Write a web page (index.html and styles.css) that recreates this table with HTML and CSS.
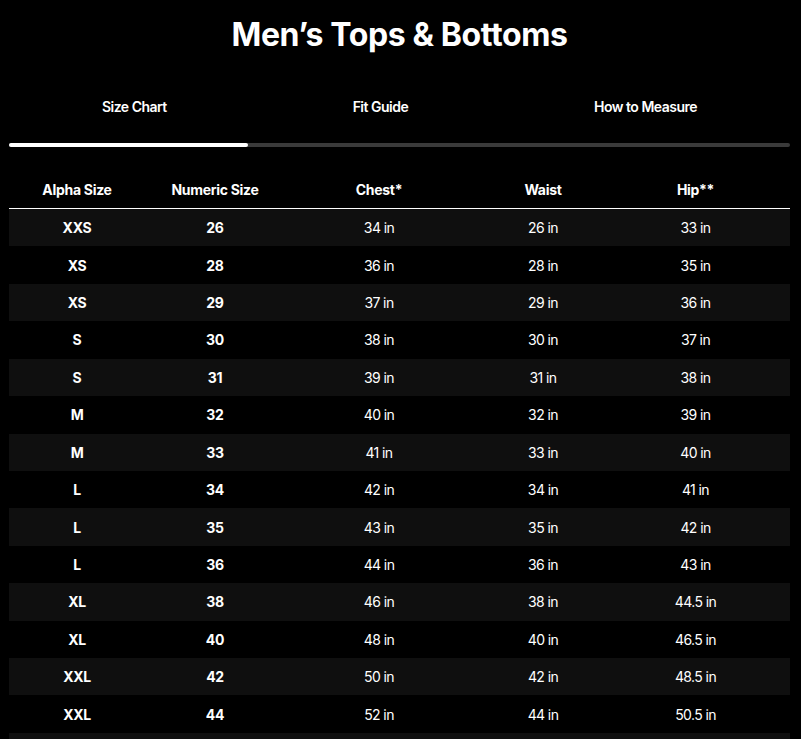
FILE: index.html
```html
<!DOCTYPE html>
<html lang="en">
<head>
<meta charset="utf-8">
<title>Men's Tops &amp; Bottoms</title>
<link rel="stylesheet" href="styles.css">
</head>
<body>
<div class="page">
  <h1 class="title">Men’s Tops &amp; Bottoms</h1>
  <nav class="tabs">
    <div class="tab">Size Chart</div>
    <div class="tab">Fit Guide</div>
    <div class="tab">How to Measure</div>
  </nav>
  <div class="track"><div class="indicator"></div></div>
  <table class="chart">
    <colgroup>
      <col class="c1"><col class="c2"><col class="c3"><col class="c4"><col class="c5">
    </colgroup>
    <thead>
      <tr><th>Alpha Size</th><th>Numeric Size</th><th>Chest*</th><th>Waist</th><th class="last">Hip**</th></tr>
    </thead>
    <tbody>
      <tr><td class="b">XXS</td><td class="b">26</td><td>34 in</td><td>26 in</td><td class="last">33 in</td></tr>
      <tr><td class="b">XS</td><td class="b">28</td><td>36 in</td><td>28 in</td><td class="last">35 in</td></tr>
      <tr><td class="b">XS</td><td class="b">29</td><td>37 in</td><td>29 in</td><td class="last">36 in</td></tr>
      <tr><td class="b">S</td><td class="b">30</td><td>38 in</td><td>30 in</td><td class="last">37 in</td></tr>
      <tr><td class="b">S</td><td class="b">31</td><td>39 in</td><td>31 in</td><td class="last">38 in</td></tr>
      <tr><td class="b">M</td><td class="b">32</td><td>40 in</td><td>32 in</td><td class="last">39 in</td></tr>
      <tr><td class="b">M</td><td class="b">33</td><td>41 in</td><td>33 in</td><td class="last">40 in</td></tr>
      <tr><td class="b">L</td><td class="b">34</td><td>42 in</td><td>34 in</td><td class="last">41 in</td></tr>
      <tr><td class="b">L</td><td class="b">35</td><td>43 in</td><td>35 in</td><td class="last">42 in</td></tr>
      <tr><td class="b">L</td><td class="b">36</td><td>44 in</td><td>36 in</td><td class="last">43 in</td></tr>
      <tr><td class="b">XL</td><td class="b">38</td><td>46 in</td><td>38 in</td><td class="last">44.5 in</td></tr>
      <tr><td class="b">XL</td><td class="b">40</td><td>48 in</td><td>40 in</td><td class="last">46.5 in</td></tr>
      <tr><td class="b">XXL</td><td class="b">42</td><td>50 in</td><td>42 in</td><td class="last">48.5 in</td></tr>
      <tr><td class="b">XXL</td><td class="b">44</td><td>52 in</td><td>44 in</td><td class="last">50.5 in</td></tr>
      <tr class="tail"><td></td><td></td><td></td><td></td><td class="last"></td></tr>
    </tbody>
  </table>
</div>
</body>
</html>
```

FILE: styles.css
```css
html, body {
  margin: 0;
  padding: 0;
  background: #000;
  color: #fff;
  font-family: Inter, "Liberation Sans", sans-serif;
}
.page {
  padding: 0 11px 0 9px;
  overflow: hidden;
  height: 739px;
}
.title {
  margin: 0;
  padding-top: 15px;
  line-height: 40px;
  font-size: 32px;
  font-weight: 700;
  text-align: center;
  letter-spacing: -0.4px;
}
.tabs {
  display: flex;
  margin-top: 42px;
}
.tab {
  flex: 1 1 auto;
  text-align: center;
  font-size: 14px;
  line-height: 20px;
  font-weight: 600;
  letter-spacing: -0.5px;
  padding-bottom: 26px;
}
.track {
  height: 4px;
  background: #3a3a3a;
  border-radius: 2px;
}
.indicator {
  width: 239px;
  height: 4px;
  background: #fff;
  border-radius: 2px;
}
.chart {
  width: 100%;
  margin-top: 23px;
  border-collapse: collapse;
  table-layout: fixed;
}
.c1 { width: 136px; }
.c2 { width: 140px; }
.c3 { width: 188px; }
.c4 { width: 140px; }
.c5 { width: 177px; }
.chart th {
  height: 38px;
  padding: 0;
  font-size: 14px;
  font-weight: 700;
  letter-spacing: -0.3px;
  text-align: center;
  border-bottom: 1px solid #fff;
  vertical-align: middle;
}
.chart td {
  height: 37.43px;
  padding: 0;
  font-size: 14px;
  font-weight: 400;
  letter-spacing: -0.6px;
  text-align: center;
  vertical-align: middle;
}
.chart td.b {
  font-weight: 700;
  letter-spacing: -0.3px;
}
.chart .last {
  padding-right: 12px;
}
.chart tbody tr:nth-child(odd) {
  background: #0f0f0f;
}
```
